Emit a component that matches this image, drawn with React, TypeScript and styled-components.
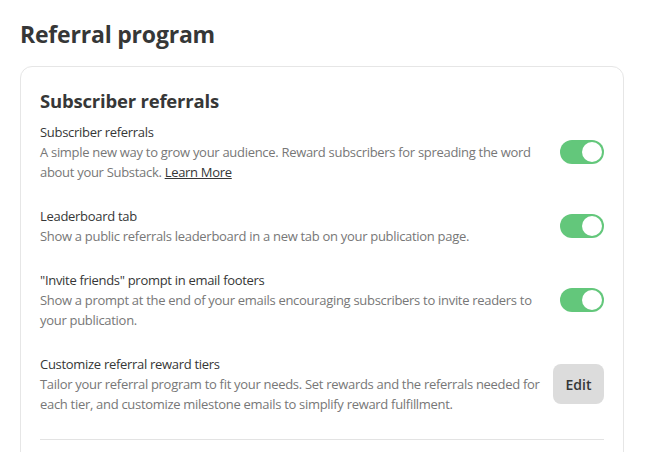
import React from "react";
import styled, { createGlobalStyle } from "styled-components";

const Global = createGlobalStyle`
  html, body { margin: 0; padding: 0; background: #ffffff; }
  body { font-family: "Open Sans", "Noto Sans", sans-serif; color: #363737; }
  * { box-sizing: border-box; }
`;

const Page = styled.div`
  padding: 14px 20px 0 20px;
`;

const PageTitle = styled.h1`
  margin: 0 0 12px 0;
  font-size: 23px;
  line-height: 40px;
  font-weight: 700;
  color: #363737;
  letter-spacing: -0.2px;
`;

const Card = styled.section`
  width: 604px;
  border: 1px solid #e6e6e6;
  border-radius: 12px;
  padding: 20px 19px 40px 19px;
`;

const CardTitle = styled.h2`
  margin: 0 0 7px 0;
  font-size: 18.5px;
  line-height: 28px;
  font-weight: 700;
  color: #363737;
  letter-spacing: -0.2px;
`;

const Rows = styled.div`
  display: flex;
  flex-direction: column;
  gap: 24px;
  padding-bottom: 25px;
  border-bottom: 1px solid #e3e3e3;
`;

const Row = styled.div`
  display: flex;
  align-items: center;
  justify-content: space-between;
  gap: 12px;
`;

const Text = styled.div`
  max-width: 508px;
  font-size: 13px;
  line-height: 20px;
  letter-spacing: -0.3px;
`;

const RowTitle = styled.div`
  color: #363737;
`;

const RowDesc = styled.div`
  color: #777777;
`;

const Link = styled.a`
  color: #363737;
  text-decoration: underline;
  cursor: pointer;
`;

const Switch = styled.div<{ $on: boolean }>`
  flex: none;
  width: 44px;
  height: 24px;
  border-radius: 12px;
  background: ${(p) => (p.$on ? "#63c77b" : "#d6d6d6")};
  padding: 2px;
  display: flex;
  justify-content: ${(p) => (p.$on ? "flex-end" : "flex-start")};
`;

const Knob = styled.div`
  width: 20px;
  height: 20px;
  border-radius: 50%;
  background: #ffffff;
`;

const EditButton = styled.button`
  flex: none;
  width: 51px;
  height: 40px;
  border: none;
  border-radius: 8px;
  background: #dcdcdc;
  color: #363737;
  font-family: inherit;
  font-size: 14px;
  font-weight: 600;
  cursor: pointer;
`;

type Setting = {
  title: string;
  desc: React.ReactNode;
  control: "switch" | "edit";
};

const settings: Setting[] = [
  {
    title: "Subscriber referrals",
    desc: (
      <>
        A simple new way to grow your audience. Reward subscribers for spreading the word about
        your Substack. <Link>Learn More</Link>
      </>
    ),
    control: "switch",
  },
  {
    title: "Leaderboard tab",
    desc: "Show a public referrals leaderboard in a new tab on your publication page.",
    control: "switch",
  },
  {
    title: "\"Invite friends\" prompt in email footers",
    desc: "Show a prompt at the end of your emails encouraging subscribers to invite readers to your publication.",
    control: "switch",
  },
  {
    title: "Customize referral reward tiers",
    desc: "Tailor your referral program to fit your needs. Set rewards and the referrals needed for each tier, and customize milestone emails to simplify reward fulfillment.",
    control: "edit",
  },
];

export default function App() {
  return (
    <>
      <Global />
      <Page>
        <PageTitle>Referral program</PageTitle>
        <Card>
          <CardTitle>Subscriber referrals</CardTitle>
          <Rows>
            {settings.map((s) => (
              <Row key={s.title}>
                <Text>
                  <RowTitle>{s.title}</RowTitle>
                  <RowDesc>{s.desc}</RowDesc>
                </Text>
                {s.control === "switch" ? (
                  <Switch $on>
                    <Knob />
                  </Switch>
                ) : (
                  <EditButton>Edit</EditButton>
                )}
              </Row>
            ))}
          </Rows>
        </Card>
      </Page>
    </>
  );
}
